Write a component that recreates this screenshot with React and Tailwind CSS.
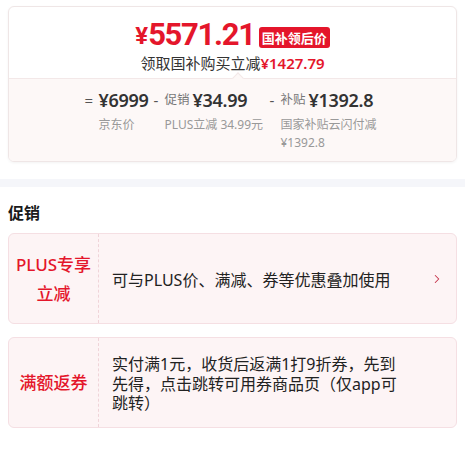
import { ChevronRight } from 'lucide-react'

const RED = 'text-[#e4162b]'

function PriceCol({ op, opWidth, label, value, desc, descWidth }) {
  return (
    <div className="flex">
      <span className={`${opWidth} h-[22px] leading-[22px] text-[15px] text-[#555]`}>{op}</span>
      <div className="flex flex-col">
        <div className="h-[22px] flex items-center gap-[3px]">
          {label && <span className="text-[12.5px] text-[#777]">{label}</span>}
          <span className="text-[18px] font-semibold text-[#333] tracking-[-0.3px]">{value}</span>
        </div>
        <p className={`mt-[5px] text-[12px] leading-[18px] text-[#999] ${descWidth}`}>{desc}</p>
      </div>
    </div>
  )
}

function PromoCard({ label, children, arrow }) {
  return (
    <div className="flex h-[91px] rounded-[6px] border border-[#f5dfe3] bg-[#fdf4f5]">
      <div className="w-[90px] flex-shrink-0 flex items-center justify-center border-r border-dashed border-[#f0d4d9]">
        <p className={`text-[17px] leading-[29px] font-medium text-center ${RED}`}>{label}</p>
      </div>
      <div className="flex-1 flex items-center pl-[13px] pr-[12px] pt-[4px]">
        <div className="flex-1 text-[16px] leading-[19.5px] text-[#222] pr-[34px]">{children}</div>
        {arrow && <ChevronRight className="w-[14px] h-[14px] text-[#c4324a] -mt-[4px]" strokeWidth={1.75} />}
      </div>
    </div>
  )
}

export default function App() {
  return (
    <div className="w-[465px] h-[452px] bg-white overflow-hidden font-['Noto_Sans','Noto_Sans_CJK_SC',sans-serif]">
      {/* price card */}
      <div className="pt-[6px] px-[8px]">
        <div className="rounded-[6px] border border-[#efe6e6] shadow-[0_1px_3px_rgba(0,0,0,0.05)] overflow-hidden">
          <div className="h-[71px] flex flex-col items-center pt-[12px]">
            <div className="h-[30px] flex items-end font-['Roboto',sans-serif]">
              <span className={`text-[24px] font-bold leading-[26px] ${RED}`}>¥</span>
              <span className={`text-[31px] font-bold leading-[28px] tracking-[-1.3px] ${RED}`}>5571.21</span>
              <span className="ml-[4px] mb-[1px] h-[21px] px-[3px] rounded-[3px] bg-[#e4162b] text-white text-[13px] font-bold leading-[21px] font-['Noto_Sans_CJK_SC',sans-serif]">国补领后价</span>
            </div>
            <p className="mt-[4px] text-[15px] leading-[20px] text-[#333]">
              领取国补购买立减<span className={`font-semibold ${RED}`}>¥1427.79</span>
            </p>
          </div>
          <div className="relative border-t border-[#f3e8e8] bg-[#fdf8f7] h-[83px] pt-[10px] flex justify-center gap-[5px]">
            <div className="absolute -top-[5px] left-[225px] w-[8px] h-[8px] rotate-45 bg-[#fdf8f7] border-t border-l border-[#f3e8e8]" />
            <PriceCol op="=" opWidth="w-[14px]" value="¥6999" desc="京东价" descWidth="w-[48px]" />
            <PriceCol op="-" opWidth="w-[11px]" label="促销" value="¥34.99" desc="PLUS立减 34.99元" descWidth="w-[100px] whitespace-nowrap" />
            <PriceCol op="-" opWidth="w-[11px]" label="补贴" value="¥1392.8" desc="国家补贴云闪付减¥1392.8" descWidth="w-[100px]" />
          </div>
        </div>
      </div>

      <div className="mt-[17px] h-[8px] bg-[#f5f6fa]" />

      {/* promotions */}
      <div className="px-[8px] pt-[15px]">
        <h2 className="text-[16px] leading-[22px] font-bold text-[#1a1a1a]">促销</h2>
        <div className="mt-[9px] flex flex-col gap-[13px]">
          <PromoCard label={<>PLUS专享<br />立减</>} arrow>
            可与PLUS价、满减、券等优惠叠加使用
          </PromoCard>
          <PromoCard label="满额返券">
            实付满1元，收货后返满1打9折券，先到先得，点击跳转可用券商品页（仅app可跳转）
          </PromoCard>
        </div>
      </div>
    </div>
  )
}
